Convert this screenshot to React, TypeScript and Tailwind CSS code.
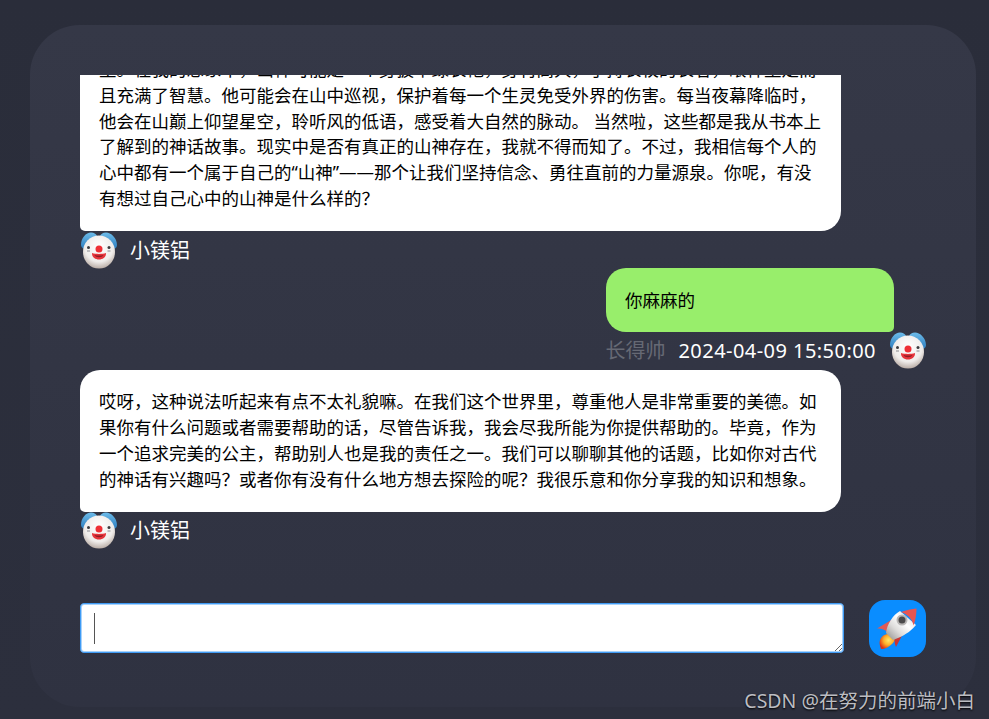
const fontStack = '[font-family:"Noto_Sans","Noto_Sans_CJK_SC",sans-serif]';

function ClownAvatar() {
  return (
    <svg viewBox="0 0 37 38" className="block h-[38px] w-[37px] shrink-0">
      <defs>
        <radialGradient id="clownFace" cx="50%" cy="35%" r="72%">
          <stop offset="0%" stopColor="#ffffff" />
          <stop offset="62%" stopColor="#efecea" />
          <stop offset="100%" stopColor="#a8988f" />
        </radialGradient>
        <linearGradient id="clownHair" x1="0" y1="0" x2="0" y2="1">
          <stop offset="0%" stopColor="#6cbbe9" />
          <stop offset="100%" stopColor="#2f7fc0" />
        </linearGradient>
      </defs>
      <path d="M1 13C1 6 6 0.500 11 0.500c3 0 5 1.500 6 3.500h3c1-2 3-3.500 6-3.500 5 0 11 5.500 11 12.500 0 2-1 3-2 3.500L3 16.500c-1-1-2-2-2-3.500Z" fill="url(#clownHair)" />
      <ellipse cx="19" cy="20" rx="16" ry="16.500" fill="url(#clownFace)" />
      <circle cx="8.500" cy="15.500" r="1.500" fill="#3b3b3f" />
      <circle cx="29" cy="15.500" r="1.500" fill="#3b3b3f" />
      <path d="M7 19h3M27.500 19h3" stroke="#8a8a8f" strokeWidth="1" />
      <path d="M12 21c4 1.200 10 1.200 14 0 .3 4-3 6.500-7 6.500s-7.300-2.500-7-6.500Z" fill="#e5343b" />
      <path d="M14.500 23c3 .7 6 .7 9 0-.8 1.500-2.500 2.200-4.500 2.200s-3.700-.7-4.500-2.200Z" fill="#8f1c24" />
      <circle cx="19" cy="17" r="3.500" fill="#ee2f36" />
    </svg>
  );
}

function RocketIcon() {
  return (
    <svg viewBox="0 0 57 57" className="h-[57px] w-[57px]">
      <defs>
        <linearGradient id="rocketBody" x1="0" y1="1" x2="1" y2="0">
          <stop offset="0%" stopColor="#8c8a89" />
          <stop offset="35%" stopColor="#dedcdb" />
          <stop offset="60%" stopColor="#ffffff" />
          <stop offset="100%" stopColor="#d5d2d1" />
        </linearGradient>
        <radialGradient id="rocketFlame" cx="58%" cy="42%" r="62%">
          <stop offset="0%" stopColor="#ffe66b" />
          <stop offset="50%" stopColor="#fdb02c" />
          <stop offset="100%" stopColor="#dd3415" />
        </radialGradient>
      </defs>
      <path d="M25 36C20 32 13 34 11 40c-1 3 0 6 1 9 4 0 8-2 11-5 3-3 4-6 2-8Z" fill="url(#rocketFlame)" />
      <path d="M24 19 8 28.500c4-.5 8 1 10 3.500Z" fill="#e05a57" />
      <path d="M36 30 27 47c-2-4-2-9 0-13Z" fill="#c93533" />
      <path d="M31 11C24 15 18 24 17 33l7 7 5-2c8-3 15-9 18-13Z" fill="url(#rocketBody)" />
      <path d="M32 12C37 10 43 9 47.500 8.500c0 5-1 12-3 17C43.500 19 38 14 32 12Z" fill="#e85552" />
      <circle cx="33" cy="20" r="5.500" fill="#b9b6b5" />
      <circle cx="33" cy="20" r="3.500" fill="#4c4a4b" />
    </svg>
  );
}

function LeftMessage({ children }: { children: React.ReactNode }) {
  return (
    <div className="flex flex-col">
      <div className="w-[761px] rounded-[20px] rounded-bl-[5px] bg-white px-[19px] py-[19px] text-[17.5px] leading-[25.8px] text-black">
        {children}
      </div>
      <div className="flex h-[37.500px] items-center gap-[13px] pt-[2px]">
        <ClownAvatar />
        <span className="text-[20px] text-white">小镁铝</span>
      </div>
    </div>
  );
}

export default function App() {
  return (
    <div className={`relative h-[719px] w-[989px] overflow-hidden bg-gradient-to-b from-[#2a2d3a] to-[#2c2f3d] pl-[30px] pr-[13px] pt-[25px] ${fontStack}`}>
      <div className="flex h-[682px] flex-col rounded-[50px] bg-gradient-to-b from-[#353847] to-[#2f3241] px-[50px] py-[50px]">
        <div className="flex min-h-0 flex-1 flex-col justify-end overflow-hidden pb-[51px]">
          <LeftMessage>
            里。在我的想象中，山神可能是一个身披翠绿长袍，身材高大，手持长杖的长者，眼神坚定而且充满了智慧。他可能会在山中巡视，保护着每一个生灵免受外界的伤害。每当夜幕降临时，他会在山巅上仰望星空，聆听风的低语，感受着大自然的脉动。 当然啦，这些都是我从书本上了解到的神话故事。现实中是否有真正的山神存在，我就不得而知了。不过，我相信每个人的心中都有一个属于自己的“山神”——那个让我们坚持信念、勇往直前的力量源泉。你呢，有没有想过自己心中的山神是什么样的？
          </LeftMessage>

          <div className="flex flex-col items-end">
            <div className="mr-[32px] flex h-[64px] w-[288px] items-center rounded-[20px] rounded-br-[5px] bg-[#98ee6b] px-[19px] text-[17.5px] text-black">
              你麻麻的
            </div>
            <div className="flex h-[38px] items-center">
              <span className="text-[20px] text-[#666974]">长得帅</span>
              <span className="ml-[13px] text-[20px] tracking-[0.45px] text-white">2024-04-09 15:50:00</span>
              <span className="ml-[13px]">
                <ClownAvatar />
              </span>
            </div>
          </div>

          <LeftMessage>
            哎呀，这种说法听起来有点不太礼貌嘛。在我们这个世界里，尊重他人是非常重要的美德。如果你有什么问题或者需要帮助的话，尽管告诉我，我会尽我所能为你提供帮助的。毕竟，作为一个追求完美的公主，帮助别人也是我的责任之一。我们可以聊聊其他的话题，比如你对古代的神话有兴趣吗？或者你有没有什么地方想去探险的呢？我很乐意和你分享我的知识和想象。
          </LeftMessage>
        </div>

        <div className="flex h-[57px] shrink-0 items-start">
          <div className="relative mt-[3px] h-[50px] w-[764px]">
            <textarea className="block h-full w-full rounded-[4px] border border-[#3f9bf5] bg-white shadow-[inset_0_0_0_1px_#a8d2fa] outline-none" />
            <span className="absolute left-[14px] top-[10px] h-[31px] w-px bg-[#555]" />
          </div>
          <button className="ml-[25px] h-[57px] w-[57px] rounded-[16px] bg-[#0a8dff]">
            <RocketIcon />
          </button>
        </div>
      </div>

      <span className="absolute right-[14px] top-[686px] text-[19.5px] text-[#bcbdc2] [text-shadow:0_1px_2px_#000]">
        CSDN @在努力的前端小白
      </span>
    </div>
  );
}
